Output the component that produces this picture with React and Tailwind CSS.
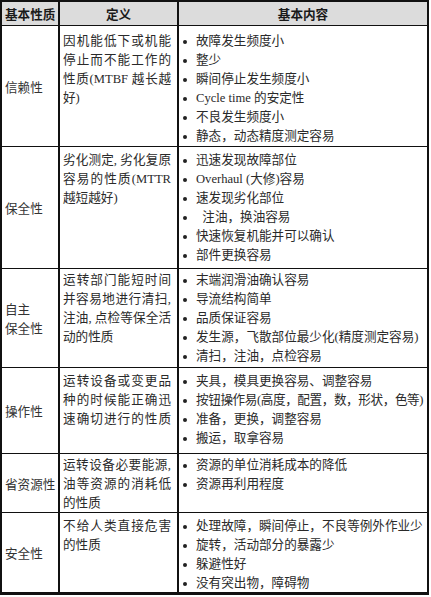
const rows = [
  {
    name: ['信赖性'],
    cls: 'h-[121px] border-b',
    pt: 'pt-[6px]',
    def: [
      { t: '因机能低下或机能', j: true },
      { t: '停止而不能工作的', j: true },
      { t: '性质(MTBF 越长越', j: true },
      { t: '好)' },
    ],
    items: ['故障发生频度小', '整少', '瞬间停止发生频度小', 'Cycle time 的安定性', '不良发生频度小', '静态，动态精度测定容易'],
  },
  {
    name: ['保全性'],
    cls: 'h-[122px] border-b',
    pt: 'pt-[4px]',
    def: [
      { t: '劣化测定, 劣化复原', j: true },
      { t: '容易的性质(MTTR', j: true },
      { t: '越短越好)' },
    ],
    items: ['迅速发现故障部位', 'Overhaul (大修)容易', '速发现劣化部位', '\u2002注油，换油容易', '快速恢复机能并可以确认', '部件更换容易'],
  },
  {
    name: ['自主', '保全性'],
    cls: 'h-[99px] border-b',
    pt: 'pt-[2px]',
    def: [
      { t: '运转部门能短时间', j: true },
      { t: '并容易地进行清扫,', j: true },
      { t: '注油, 点检等保全活', j: true },
      { t: '动的性质' },
    ],
    items: ['末端润滑油确认容易', '导流结构简单', '品质保证容易', '发生源，飞散部位最少化(精度测定容易)', '清扫，注油，点检容易'],
  },
  {
    name: ['操作性'],
    cls: 'h-[86px] border-b',
    pt: 'pt-[4px]',
    def: [
      { t: '运转设备或变更品', j: true },
      { t: '种的时候能正确迅', j: true },
      { t: '速确切进行的性质', j: true },
    ],
    items: ['夹具，模具更换容易、调整容易', '按钮操作易(高度，配置，数，形状，色等)', '准备，更换，调整容易', '搬运，取拿容易'],
  },
  {
    name: ['省资源性'],
    cls: 'h-[59px] border-b',
    pt: 'pt-[2px]',
    def: [
      { t: '运转设备必要能源,', j: true },
      { t: '油等资源的消耗低', j: true },
      { t: '的性质' },
    ],
    items: ['资源的单位消耗成本的降低', '资源再利用程度'],
  },
  {
    name: ['安全性'],
    cls: 'h-[79px]',
    pt: 'pt-[4px]',
    def: [
      { t: '不给人类直接危害', j: true },
      { t: '的性质' },
    ],
    items: ['处理故障，瞬间停止，不良等例外作业少', '旋转，活动部分的暴露少', '躲避性好', '没有突出物，障碍物'],
  },
];

export default function App() {
  return (
    <div className="w-[431px] h-[597px] bg-white">
      <div className="w-[429px] border-2 border-b-[3px] border-[#111] text-[12.6px] leading-[19px] text-[#2a2a2a] font-['Liberation_Serif','Noto_Sans_CJK_SC',serif]">
        <div className="flex h-[24px] border-b border-[#111] bg-[#dcdcdc] font-bold text-[#1a1a1a] font-['Noto_Sans_CJK_SC',sans-serif]">
          <div className="w-[58px] border-r-2 border-[#111] pl-[3px] flex items-center">基本性质</div>
          <div className="w-[119px] border-r-2 border-[#111] flex items-center justify-center">定义</div>
          <div className="flex-1 flex items-center justify-center">基本内容</div>
        </div>
        {rows.map((r, i) => (
          <div key={i} className={`flex border-[#111] ${r.cls}`}>
            <div className="w-[58px] border-r-2 border-[#111] pl-[3px] flex flex-col justify-center font-['Noto_Sans_CJK_SC',sans-serif] text-[#333]">
              {r.name.map(n => <div key={n}>{n}</div>)}
            </div>
            <div className={`w-[119px] border-r-2 border-[#111] pl-[3px] pr-[6px] ${r.pt}`}>
              {r.def.map((d, k) => (
                <div key={k} className={d.j ? 'text-justify [text-align-last:justify]' : ''}>{d.t}</div>
              ))}
            </div>
            <div className={`flex-1 pl-[4px] ${r.pt}`}>
              {r.items.map((it, k) => (
                <div key={k} className="flex items-center whitespace-pre">
                  <span className="w-[4px] h-[4px] rounded-full bg-[#222] shrink-0 mr-[9px]" />
                  <span className={it.startsWith('按钮') ? 'tracking-[-0.4px]' : ''}>{it}</span>
                </div>
              ))}
            </div>
          </div>
        ))}
      </div>
    </div>
  );
}
